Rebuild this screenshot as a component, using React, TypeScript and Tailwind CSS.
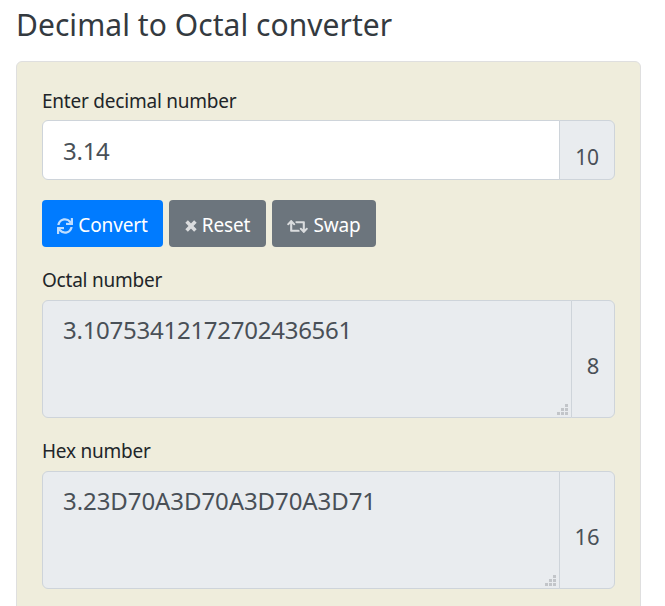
import { FaSync, FaRetweet } from "react-icons/fa";

const font = "font-['Noto_Sans','Open_Sans',sans-serif]";

function Btn({ icon, label, cls }: { icon: React.ReactNode; label: string; cls: string }) {
  return (
    <button className={`h-[47px] flex items-center justify-center gap-[5px] pt-[3px] rounded-[4px] text-white text-[19px] tracking-[-0.15px] ${cls}`}>
      {icon}
      <span>{label}</span>
    </button>
  );
}

function Grip() {
  return (
    <svg className="absolute right-[4px] bottom-[3px] w-[11px] h-[11px] pointer-events-none" viewBox="0 0 11 11" fill="#c2c5c9">
      <rect x="8" y="0" width="3" height="3" />
      <rect x="4" y="4" width="3" height="3" />
      <rect x="8" y="4" width="3" height="3" />
      <rect x="0" y="8" width="3" height="3" />
      <rect x="4" y="8" width="3" height="3" />
      <rect x="8" y="8" width="3" height="3" />
    </svg>
  );
}

function Output({ value, base, addon, track }: { value: string; base: string; addon: string; track: string }) {
  return (
    <div className="flex h-[118px]">
      <div className="relative flex-1 min-w-0">
        <textarea readOnly value={value} className={`block w-full h-full rounded-l-[6px] border border-[#ced4da] bg-[#e9ecef] px-[20px] py-[11px] text-[24px] leading-[36px] text-[#495057] outline-none resize-none ${track}`} />
        <Grip />
      </div>
      <div className={`${addon} -ml-px rounded-r-[6px] border border-[#ced4da] bg-[#e9ecef] flex items-center justify-center pt-[12px] text-[22px] text-[#495057]`}>{base}</div>
    </div>
  );
}

export default function App() {
  return (
    <div className={`h-[606px] w-[665px] overflow-hidden bg-white pl-[16px] pr-[24px] text-[#212529] ${font}`}>
      <h1 className="pt-[5px] h-[61px] text-[30px] leading-[40px] text-[#343a40] tracking-[0.05px] whitespace-nowrap">Decimal to Octal converter</h1>
      <div className="h-[600px] rounded-[6px] border border-[#dfdfdf] bg-[#efeddc] px-[25px] pt-[26px]">
        <label className="block text-[19px] leading-[27px] mb-[5px] tracking-[-0.22px]">Enter decimal number</label>
        <div className="flex h-[60px]">
          <input readOnly value="3.14" className="flex-1 min-w-0 rounded-l-[6px] border border-[#ced4da] bg-white px-[20px] pt-[2px] text-[24px] text-[#495057] tracking-[-0.26px] outline-none" />
          <div className="w-[56px] -ml-px rounded-r-[6px] border border-[#ced4da] bg-[#e9ecef] flex items-end justify-center pb-[8px] text-[21px] leading-[28px] text-[#495057] tracking-[-0.2px]">10</div>
        </div>
        <div className="flex gap-[6px] mt-[20px]">
          <Btn cls="w-[121px] bg-[#007bff]" icon={<FaSync className="text-[16px] opacity-75 translate-y-px" />} label="Convert" />
          <Btn
            cls="w-[97px] bg-[#6c757d]"
            icon={
              <svg className="w-[12px] h-[12px] opacity-75 translate-y-[1px]" viewBox="0 0 12 12" stroke="#fff" strokeWidth="3.6" fill="none">
                <path d="M1.6 1.6 10.4 10.4M10.4 1.6 1.6 10.4" />
              </svg>
            }
            label="Reset"
          />
          <Btn cls="w-[104px] bg-[#6c757d]" icon={<FaRetweet className="text-[21px] opacity-75 translate-y-px" />} label="Swap" />
        </div>
        <label className="block mt-[20px] text-[19px] leading-[27px] mb-[6px] tracking-[-0.22px]">Octal number</label>
        <Output value="3.10753412172702436561" base="8" addon="w-[44px]" track="tracking-[-0.26px]" />
        <label className="block mt-[20px] text-[19px] leading-[27px] mb-[6px] tracking-[-0.22px]">Hex number</label>
        <Output value="3.23D70A3D70A3D70A3D71" base="16" addon="w-[56px]" track="tracking-[-0.08px]" />
      </div>
    </div>
  );
}
